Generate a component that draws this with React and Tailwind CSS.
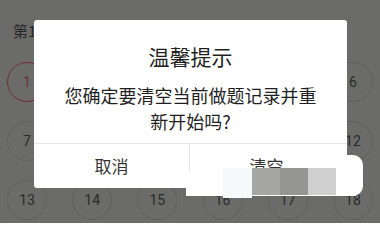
import React from "react";

const rows = [
  [1, 2, 3, 4, 5, 6],
  [7, 8, 9, 10, 11, 12],
  [13, 14, 15, 16, 17, 18],
];

export default function App() {
  const font = { fontFamily: '"Noto Sans CJK SC", "Noto Sans", Roboto, sans-serif' };
  return (
    <div
      className="relative w-[380px] h-[223px] overflow-hidden bg-[#6b6c69]"
      style={font}
    >
      {/* underlying page (dimmed) */}
      <div className="flex flex-col">
        <div className="h-[62px] pl-[13px] pt-[21px] text-[15px] leading-[20px] text-[#262626]">
          第1题
        </div>
        <div className="flex flex-col gap-[19px] px-[7px]">
          {rows.map((r, i) => (
            <div key={i} className="flex justify-between">
              {r.map((n) => (
                <div
                  key={n}
                  className={
                    n === 1
                      ? "w-[40px] h-[40px] rounded-full border border-[#6f2f36] flex items-center justify-center text-[14px] text-[#6f2f36]"
                      : "w-[40px] h-[40px] rounded-full border border-[#60615e] flex items-center justify-center text-[14px] text-[#2a2a2a]"
                  }
                  style={{ fontFamily: "Roboto, sans-serif" }}
                >
                  {n}
                </div>
              ))}
            </div>
          ))}
        </div>
      </div>

      {/* dialog */}
      <div className="absolute left-[34px] top-[20px] w-[313px] h-[168px] bg-white rounded-[3px] flex flex-col">
        <div className="h-[123px] flex flex-col items-center pt-[24px] px-[10px]">
          <div className="text-[21px] leading-[24px] text-[#1f1f1f]">温馨提示</div>
          <div className="mt-[14px] text-[18px] leading-[26px] text-[#1f1f1f] text-center whitespace-nowrap">
            您确定要清空当前做题记录并重
            <br />
            新开始吗?
          </div>
        </div>
        <div className="flex-1 flex border-t border-[#e6e6e6]">
          <div className="w-[156px] border-r border-[#e6e6e6] flex items-center justify-center text-[17px] text-[#333333]">
            取消
          </div>
          <div className="flex-1 flex items-center justify-center text-[17px] text-[#333333] pr-[4px]">
            清空
          </div>
        </div>
      </div>

      {/* mosaic / smudge overlay */}
      <div className="absolute left-[186px] top-[172px] w-[170px] h-[24px] bg-white" />
      <div className="absolute left-[336px] top-[155px] w-[27px] h-[41px] bg-white rounded-r-[10px]" />
      <div className="absolute left-[223px] top-[168px] w-[29px] h-[30px] bg-[#f7f9fb]" />
      <div className="absolute left-[252px] top-[168px] w-[28px] h-[27px] bg-[#a6a7a5]" />
      <div className="absolute left-[280px] top-[168px] w-[28px] h-[27px] bg-[#959694]" />
      <div className="absolute left-[308px] top-[168px] w-[28px] h-[27px] bg-[#cfcfcf]" />
    </div>
  );
}
